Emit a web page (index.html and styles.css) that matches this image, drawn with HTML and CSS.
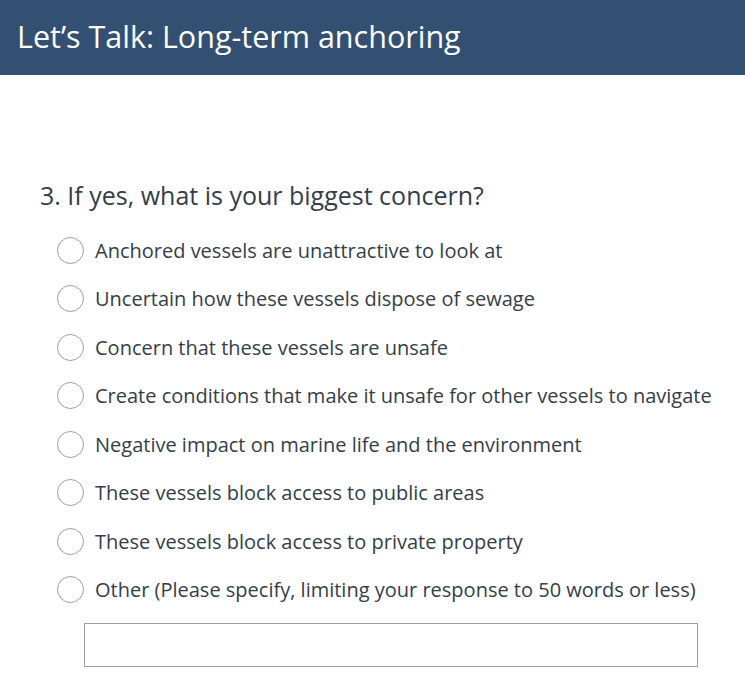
FILE: index.html
```html
<!DOCTYPE html>
<html lang="en">
<head>
  <meta charset="UTF-8">
  <meta name="viewport" content="width=device-width, initial-scale=1.0">
  <title>Let's Talk: Long-term anchoring</title>
  <link rel="stylesheet" href="styles.css">
</head>
<body>
  <header class="survey-header">
    <h1>Let’s Talk: Long-term anchoring</h1>
  </header>

  <main class="survey">
    <fieldset class="question">
      <legend>3. If yes, what is your biggest concern?</legend>
      <div class="options">
        <label class="option"><input type="radio" name="q3"><span class="radio"></span>Anchored vessels are unattractive to look at</label>
        <label class="option"><input type="radio" name="q3"><span class="radio"></span>Uncertain how these vessels dispose of sewage</label>
        <label class="option"><input type="radio" name="q3"><span class="radio"></span>Concern that these vessels are unsafe</label>
        <label class="option"><input type="radio" name="q3"><span class="radio"></span>Create conditions that make it unsafe for other vessels to navigate</label>
        <label class="option"><input type="radio" name="q3"><span class="radio"></span>Negative impact on marine life and the environment</label>
        <label class="option"><input type="radio" name="q3"><span class="radio"></span>These vessels block access to public areas</label>
        <label class="option"><input type="radio" name="q3"><span class="radio"></span>These vessels block access to private property</label>
        <label class="option"><input type="radio" name="q3"><span class="radio"></span>Other (Please specify, limiting your response to 50 words or less)</label>
      </div>
      <input type="text" class="other-input" aria-label="Other">
    </fieldset>
  </main>
</body>
</html>
```

FILE: styles.css
```css
body { font-family: "Open Sans", "Liberation Sans", sans-serif; margin:0; padding:0; background:#fff; color:#333e48; }
.survey-header { background:#335073; height:75px; box-sizing:border-box; display:flex; align-items:center; padding:0 17px 4px; }
.survey-header h1 { margin:0; color:#fff; font-weight:400; font-size:30.5px; white-space:nowrap; }
.survey { padding:103px 0 0 40px; }
.question { border:none; margin:0; padding:0; }
.question legend { padding:0; font-size:25px; line-height:34px; color:#333e48; white-space:nowrap; }
.options { display:flex; flex-direction:column; padding:14px 0 0 17px; }
.option { display:flex; align-items:center; height:48.5px; font-size:20px; color:#333e48; white-space:nowrap; cursor:pointer; }
.option input { position:absolute; opacity:0; pointer-events:none; }
.radio { width:25px; height:25px; border:1px solid #9d9d9d; border-radius:50%; margin-right:11px; flex-shrink:0; }
.other-input { display:block; margin:9px 0 0 44px; width:614px; height:44px; box-sizing:border-box; border:1px solid #9d9d9d; border-radius:0; }
```
